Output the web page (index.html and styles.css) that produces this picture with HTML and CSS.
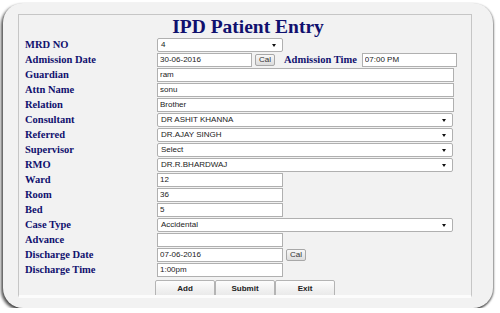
FILE: index.html
```html
<!DOCTYPE html>
<html lang="en">
<head>
  <meta charset="UTF-8">
  <meta name="viewport" content="width=device-width, initial-scale=1.0">
  <title>IPD Patient Entry</title>
  <link rel="stylesheet" href="styles.css">
</head>
<body>
  <div class="frame">
    <div class="panel">
      <h1 class="title">IPD Patient Entry</h1>

      <div class="row">
        <label class="lbl">MRD NO</label>
        <div class="sel w-short">4</div>
      </div>
      <div class="row">
        <label class="lbl">Admission Date</label>
        <input class="txt w-date" type="text" value="30-06-2016">
        <button class="cal">Cal</button>
        <label class="lbl lbl-inline">Admission Time</label>
        <input class="txt w-date" type="text" value="07:00 PM">
      </div>
      <div class="row">
        <label class="lbl">Guardian</label>
        <input class="txt w-long" type="text" value="ram">
      </div>
      <div class="row">
        <label class="lbl">Attn Name</label>
        <input class="txt w-long" type="text" value="sonu">
      </div>
      <div class="row">
        <label class="lbl">Relation</label>
        <input class="txt w-long" type="text" value="Brother">
      </div>
      <div class="row">
        <label class="lbl">Consultant</label>
        <div class="sel w-wide">DR ASHIT KHANNA</div>
      </div>
      <div class="row">
        <label class="lbl">Referred</label>
        <div class="sel w-wide">DR.AJAY SINGH</div>
      </div>
      <div class="row">
        <label class="lbl">Supervisor</label>
        <div class="sel w-wide">Select</div>
      </div>
      <div class="row">
        <label class="lbl">RMO</label>
        <div class="sel w-wide">DR.R.BHARDWAJ</div>
      </div>
      <div class="row">
        <label class="lbl">Ward</label>
        <input class="txt w-short" type="text" value="12">
      </div>
      <div class="row">
        <label class="lbl">Room</label>
        <input class="txt w-short" type="text" value="36">
      </div>
      <div class="row">
        <label class="lbl">Bed</label>
        <input class="txt w-short" type="text" value="5">
      </div>
      <div class="row">
        <label class="lbl">Case Type</label>
        <div class="sel w-wide">Accidental</div>
      </div>
      <div class="row">
        <label class="lbl">Advance</label>
        <input class="txt w-short" type="text" value="">
      </div>
      <div class="row">
        <label class="lbl">Discharge Date</label>
        <input class="txt w-short" type="text" value="07-06-2016">
        <button class="cal">Cal</button>
      </div>
      <div class="row">
        <label class="lbl">Discharge Time</label>
        <input class="txt w-short" type="text" value="1:00pm">
      </div>

      <div class="actions">
        <button class="btn">Add</button>
        <button class="btn">Submit</button>
        <button class="btn">Exit</button>
      </div>
    </div>
  </div>
</body>
</html>
```

FILE: styles.css
```css
* {
  margin: 0;
  padding: 0;
  box-sizing: border-box;
}

body {
  background-color: #fff;
  font-family: "Liberation Sans", Arial, sans-serif;
}

.frame {
  width: 490px;
  height: 305px;
  margin: 3px 0 0 3px;
  padding: 11px 21px 0 15px;
  background-color: #f2f2f2;
  border-radius: 20px;
  box-shadow: -2px 2px 3px rgba(0, 0, 0, 0.65), 1px 1px 2px rgba(0, 0, 0, 0.45);
}

.panel {
  height: 284px;
  padding-left: 6px;
  border: 1px solid #c6c6c6;
  border-bottom: 3px solid #fcfcfc;
  overflow: hidden;
}

.title {
  height: 22px;
  line-height: 24px;
  text-align: center;
  font-family: "Liberation Serif", "Times New Roman", serif;
  font-size: 19.5px;
  font-weight: bold;
  color: #10106e;
}

.row {
  display: flex;
  align-items: center;
  height: 15px;
}

.lbl {
  width: 132px;
  font-family: "Liberation Serif", "Times New Roman", serif;
  font-size: 10.5px;
  font-weight: bold;
  color: #10106e;
}

.lbl-inline {
  width: auto;
  margin: 0 5px 0 9px;
}

.txt {
  height: 14px;
  padding: 0 2px;
  border: 1px solid #b0b0b0;
  background-color: #fff;
  font-family: "Liberation Sans", Arial, sans-serif;
  font-size: 8px;
  color: #222;
  outline: none;
}

.w-short { width: 126px; }
.w-date { width: 95px; }
.w-long { width: 297px; }
.w-wide { width: 296px; }

/* looks like a closed dropdown */
.sel {
  position: relative;
  height: 14px;
  line-height: 12px;
  padding: 0 3px;
  border: 1px solid #b0b0b0;
  border-radius: 2px;
  background-color: #fff;
  font-size: 8px;
  color: #222;
}

.sel::after {
  content: "";
  position: absolute;
  right: 6px;
  top: 5px;
  border-left: 2px solid transparent;
  border-right: 2px solid transparent;
  border-top: 3px solid #111;
}

.cal {
  width: 20px;
  height: 12px;
  margin-left: 3px;
  border: 1px solid #a8a8a8;
  border-radius: 2px;
  background: linear-gradient(#f8f8f8, #dcdcdc);
  font-family: "Liberation Sans", Arial, sans-serif;
  font-size: 8px;
  color: #333;
}

.actions {
  display: flex;
  margin: 3px 0 0 130px;
}

.btn {
  width: 60px;
  height: 20px;
  padding-bottom: 3px;
  border: 1px solid #b4b4b4;
  border-radius: 2px;
  background: linear-gradient(#fdfdfd, #e4e4e4);
  font-family: "Liberation Sans", Arial, sans-serif;
  font-size: 8px;
  font-weight: bold;
  color: #222;
}
```
